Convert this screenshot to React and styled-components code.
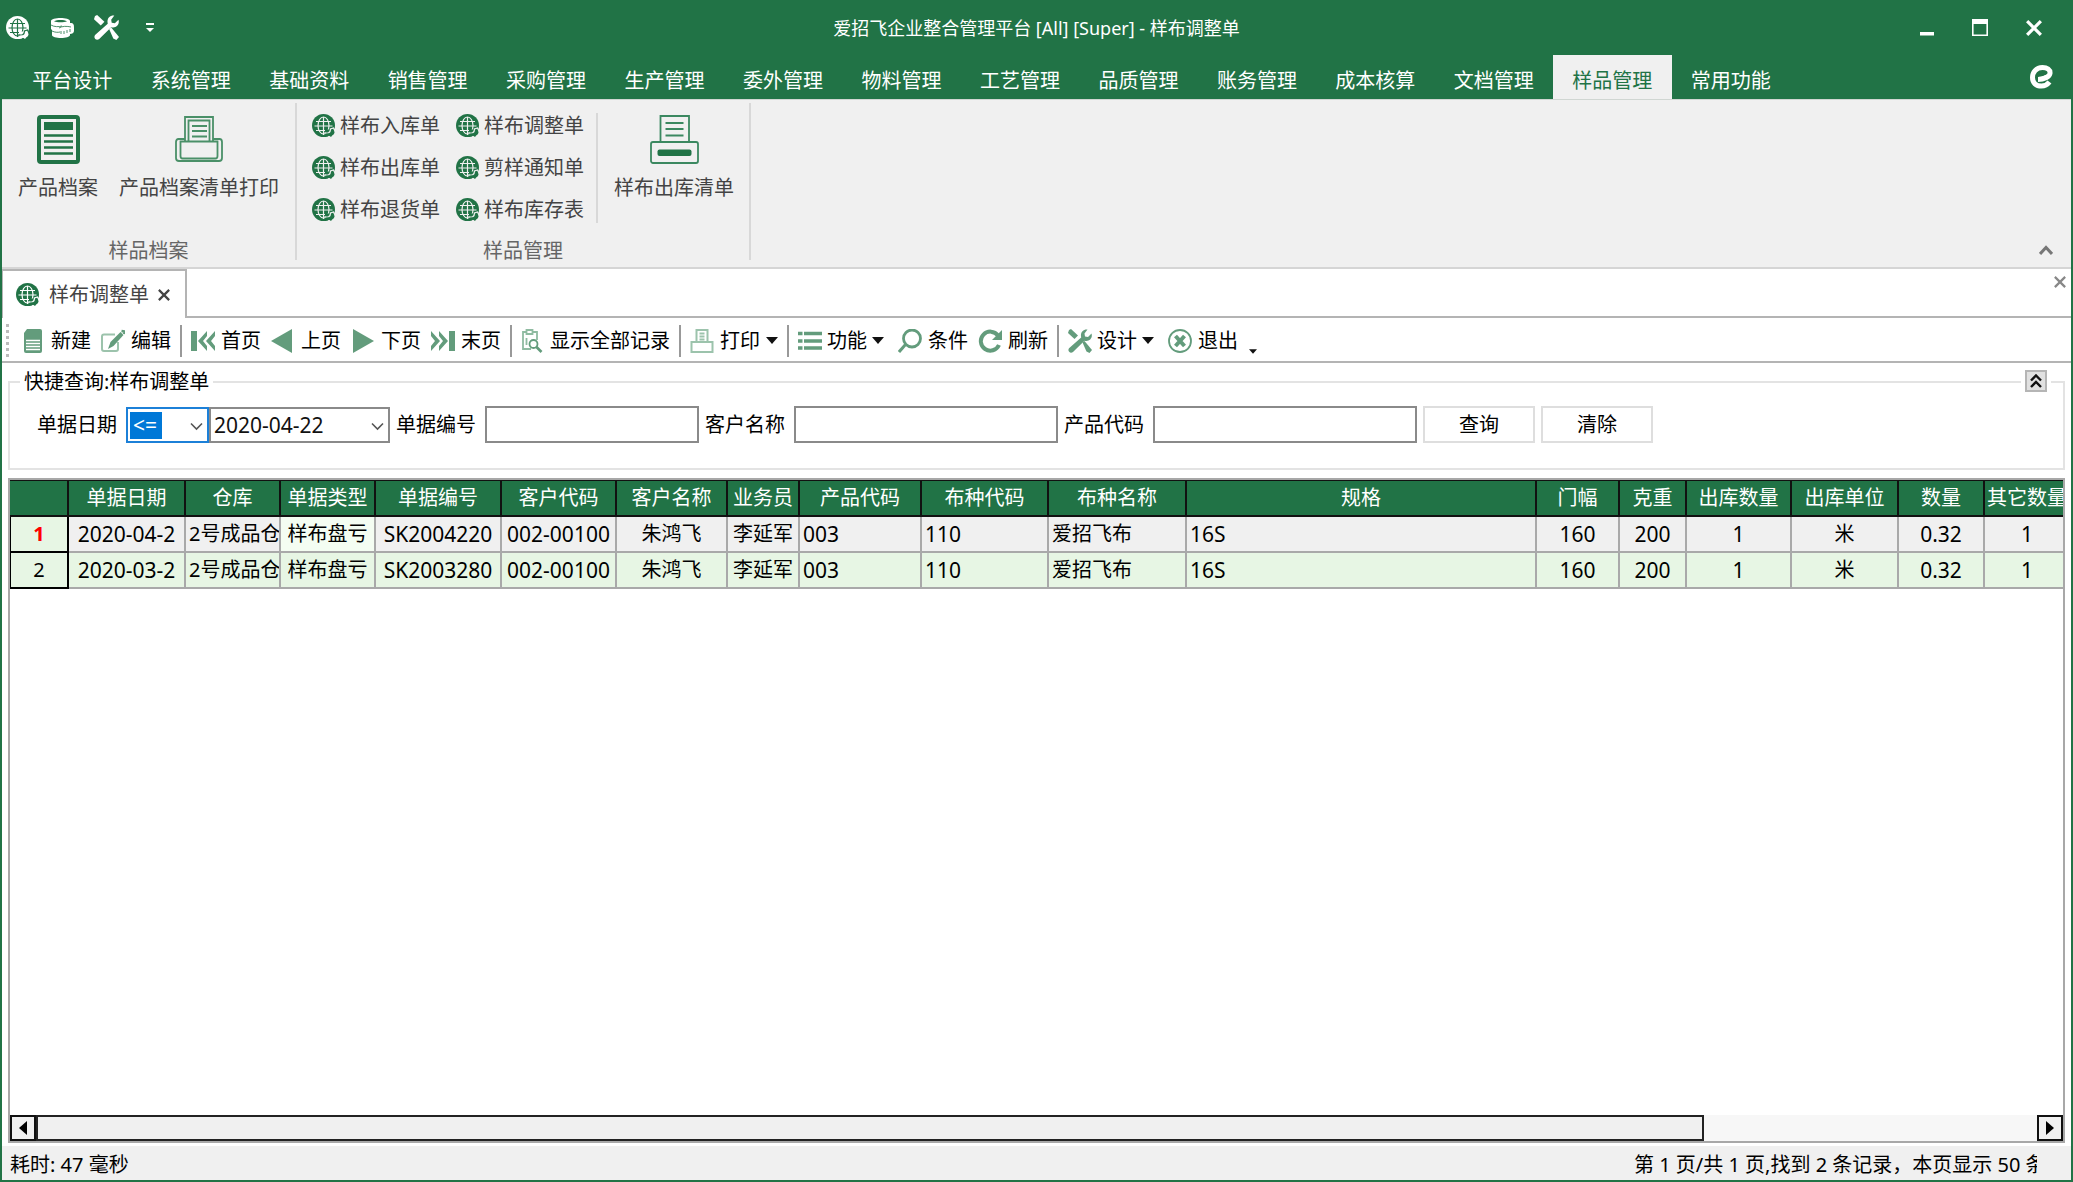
import React from 'react';
import styled, { createGlobalStyle } from 'styled-components';

const GlobalStyle = createGlobalStyle`
    * {
        box-sizing: border-box;
    }
    body {
        margin: 0;
        font-family: "Noto Sans", "Noto Sans CJK SC", sans-serif;
        font-size: 20px;
        line-height: 24px;
        color: #000;
    }
    button, input, select {
        font: inherit;
        color: inherit;
        margin: 0;
        padding: 0;
        border: none;
        border-radius: 0;
        background: none;
    }
`;

const Window = styled.div`
    display: flex;
    flex-direction: column;
    min-height: 100vh;
    border: 2px solid #217346;
    border-top: none;
    background: #fff;
`;

// Title bar
const TitleBar = styled.header`
    display: grid;
    grid-template-columns: 1fr auto 1fr;
    align-items: center;
    height: 55px;
    background: #217346;
    color: #fff;
`;
const QuickAccess = styled.div`
    display: flex;
    align-items: center;
    gap: 19px;
    padding-left: 4px;
`;
const PlainButton = styled.button`
    display: flex;
    align-items: center;
    justify-content: center;
    cursor: pointer;
`;
const WindowTitle = styled.h1`
    margin: 0;
    font-size: 18px;
    font-weight: 400;
`;
const WindowButtons = styled.div`
    display: flex;
    justify-content: flex-end;
    gap: 38px;
    padding-right: 29px;
`;

// Ribbon
const TabRow = styled.nav`
    display: flex;
    justify-content: space-between;
    height: 44px;
    padding-left: 11px;
    padding-right: 17px;
    background: #217346;
`;
const TabList = styled.div`
    display: grid;
    grid-template-columns: repeat(15, 1fr);
    width: 1777px;
`;
const RibbonTab = styled.button`
    padding-top: 8px;
    cursor: pointer;
    color: ${props => (props.$active ? '#217346' : '#fff')};
    background: ${props => (props.$active ? '#f0f0f0' : 'transparent')};
`;
const Ribbon = styled.section`
    display: flex;
    height: 170px;
    padding-top: 3px;
    border-top: 1px solid #d0d6d2;
    border-bottom: 2px solid #d5d5d5;
    background: #f0f0f0;
    color: #444;
`;
const RibbonGroup = styled.div`
    display: flex;
    flex-direction: column;
    justify-content: space-between;
    height: 157px;
    padding: 0 ${props => props.$pad}px;
    border-right: 2px solid #d8d8d8;
`;
const GroupBody = styled.div`
    display: flex;
    gap: ${props => props.$gap || 0}px;
`;
const GroupLabel = styled.div`
    color: #666;
    text-align: center;
    line-height: 18px;
`;
const LargeButton = styled.button`
    display: flex;
    flex-direction: column;
    align-items: center;
    gap: 12px;
    padding-top: 12px;
    cursor: pointer;
`;
const SmallGrid = styled.div`
    display: grid;
    grid-template-columns: 128px 128px;
    grid-auto-rows: 42px;
    column-gap: 16px;
    padding: 2px 12px 0 0;
`;
const SmallButton = styled.button`
    display: flex;
    align-items: center;
    gap: 4px;
    white-space: nowrap;
    cursor: pointer;
`;
const Divider = styled.div`
    width: 2px;
    height: 110px;
    margin: 10px 16px 0 0;
    background: #d8d8d8;
`;
const RibbonCorner = styled.div`
    display: flex;
    flex: 1;
    align-items: flex-end;
    justify-content: flex-end;
    padding: 0 18px 12px;
`;

// Document tabs
const DocTabs = styled.div`
    display: flex;
    justify-content: space-between;
    height: 49px;
    border-bottom: 2px solid #b4b4b4;
    background: #fff;
`;
const DocTab = styled.div`
    display: flex;
    align-items: center;
    gap: 9px;
    height: 49px;
    padding: 0 15px 0 13px;
    border: 2px solid #b4b4b4;
    border-bottom: none;
    border-left-width: 1px;
    background: #fff;
    color: #444;
`;
const DocClose = styled(PlainButton)`
    align-self: flex-start;
    padding: 7px 5px;
`;

// Toolbar
const Toolbar = styled.div`
    display: flex;
    align-items: center;
    height: 45px;
    padding: 2px 0 0 4px;
    border-bottom: 2px solid #b4b4b4;
    background: #fff;
`;
const Grip = styled.div`
    width: 3px;
    height: 34px;
    margin-right: 7px;
    background: repeating-linear-gradient(#bbb 0 3px, #fff 3px 6px);
`;
const ToolButton = styled.button`
    display: flex;
    align-items: center;
    gap: ${props => props.$gap || 6}px;
    padding: 0 ${props => (props.$wide ? 9 : 5)}px 0 5px;
    white-space: nowrap;
    cursor: pointer;
`;
const ToolSeparator = styled.div`
    width: 2px;
    height: 32px;
    margin: 0 4px;
    background: #999;
`;
const Overflow = styled(PlainButton)`
    align-self: flex-end;
    padding: 0 6px 7px;
`;

// Quick query panel
const QueryPanel = styled.section`
    position: relative;
    margin: 18px 6px 0;
    padding: 23px 0 25px 27px;
    border: 2px solid #e3e3e3;
`;
const PanelTitle = styled.h2`
    position: absolute;
    top: -13px;
    left: 10px;
    margin: 0;
    padding: 0 4px;
    font-size: 20px;
    font-weight: 400;
    background: #fff;
`;
const CollapseBox = styled.div`
    position: absolute;
    top: -13px;
    right: 12px;
    padding: 0 4px;
    background: #fff;
`;
const CollapseButton = styled(PlainButton)`
    width: 22px;
    height: 22px;
    border: 2px solid #b5b5b5;
    background: #e1e1e1;
`;
const QueryForm = styled.form`
    display: flex;
    align-items: center;
    gap: 6px;
    height: 37px;
`;
const Field = styled.div`
    display: flex;
    align-items: center;
    gap: 9px;
`;
const FieldLabel = styled.label`
    white-space: nowrap;
`;
const ComboPair = styled.div`
    display: flex;
`;
const Combo = styled.div`
    position: relative;
    width: ${props => props.$width}px;
    svg {
        position: absolute;
        top: 15px;
        right: 6px;
        pointer-events: none;
    }
`;
const ComboSelect = styled.select`
    appearance: none;
    width: 100%;
    height: 36px;
    padding-left: ${props => (props.$selected ? 5 : 3)}px;
    font-size: 21px;
    color: ${props => (props.$selected ? '#fff' : '#111')};
    border: 2px solid ${props => (props.$selected ? '#1c80d8' : '#8a8a8a')};
    background: ${props => (props.$selected
        ? 'linear-gradient(#0078d7, #0078d7) 2px 3px / 32px 27px no-repeat #fff'
        : '#fff')};
    outline: none;
`;
const TextInput = styled.input`
    width: ${props => props.$width}px;
    height: 37px;
    padding: 0 6px;
    border: 2px solid #8a8a8a;
    background: #fff;
`;
const FormButton = styled.button`
    width: 112px;
    height: 37px;
    border: 2px solid #dedede;
    background: #fff;
    cursor: pointer;
`;

// Data grid
const GridFrame = styled.main`
    display: flex;
    flex: 1;
    flex-direction: column;
    margin: 8px 6px 3px;
    border: 2px solid #a8a8a8;
    background: #fff;
`;
const GridScroll = styled.div`
    flex: 1;
    width: 100%;
    min-width: 0;
    overflow: hidden;
`;
const Table = styled.table`
    width: 2061px;
    table-layout: fixed;
    border-collapse: separate;
    border-spacing: 0;
`;
const HeadCell = styled.th`
    height: 37px;
    padding: 0;
    border: 1px solid #111;
    border-width: 1px 2px 2px 0;
    background: #217346;
    color: #fff;
    font-weight: 400;
    white-space: nowrap;
`;
const RowHead = styled.th`
    height: 36px;
    padding: 0;
    border: 2px solid #000;
    border-width: 0 2px 2px 1px;
    background: #e7f6e4;
    color: ${props => (props.$current ? '#f00' : '#000')};
    font-weight: ${props => (props.$current ? 700 : 400)};
`;
const Cell = styled.td`
    height: 36px;
    padding: 0 ${props => (props.$left ? 3 : 0)}px;
    border: 2px solid #a9a9a9;
    border-width: 0 2px 2px 0;
    background: ${props => props.$bg};
    font-size: ${props => (props.$latin ? 21 : 20)}px;
    text-align: ${props => (props.$left ? 'left' : 'center')};
    white-space: nowrap;
    overflow: hidden;
`;
const ScrollBar = styled.div`
    display: flex;
    height: 26px;
    background: #f7f7f7;
`;
const ScrollButton = styled(PlainButton)`
    width: 26px;
    border: 2px solid #111;
    background: #f0f0f0;
`;
const ScrollThumb = styled.div`
    flex: 5;
    border: 2px solid #222;
    background: #f0f0f0;
`;
const ScrollTrack = styled.div`
    flex: 1;
`;

// Status bar
const StatusBar = styled.footer`
    display: flex;
    justify-content: space-between;
    align-items: center;
    height: 34px;
    padding: 4px 34px 0 8px;
    background: #f0f0f0;
`;
const StatusText = styled.div`
    white-space: nowrap;
    line-height: 30px;
`;
const PageInfo = styled(StatusText)`
    width: 403px;
    overflow: hidden;
`;

const TINT = '#639c7c';

function GlobeIcon({ size = 24, color = '#217346', line = '#f0f0f0' }) {
    return (
        <svg width={size} height={size} viewBox="0 0 24 24" fill="none">
            <circle cx="11.5" cy="11.5" r="11.5" fill={color} />
            <g stroke={line} strokeWidth="1.2">
                <ellipse cx="11.5" cy="11.5" rx="5.5" ry="8.5" />
                <path d="M11.5 3v18M4 7.500h15M2.500 12h18M4 16.500h9" />
            </g>
            <path d="M13.500 15.500h9v7h-9z" fill={color} />
            <path d="M12.500 18.500c3 1.500 6 .5 6-3.500l3-1 2 4" stroke={line} strokeWidth="1.3" />
            <path d="M15 24l1.500-2 4.500-1 3-3.500V24z" fill={line} />
            <path d="M14 19.500l5 3.500 3-4z" fill={color} />
        </svg>
    );
}

function DatabaseIcon() {
    return (
        <svg width="26" height="26" viewBox="0 0 26 26" fill="#fff">
            <path d="M2 6c0-4 19-4 19 0v2c4 0 4 2 4 5v3c0 2-2 3-4 3v1c0 4-18 4-18 0v-5l-1-1z" />
            <path d="M5 6.200c3-1.500 10-1.500 13 0-3 1.400-10 1.400-13 0z" fill="#217346" />
            <path d="M2 10c3 2 8 2 11 1M3 16c3 1.500 6 1.500 8 1M10 13c3-2 8-2 12-1" stroke="#217346" strokeWidth=".8" fill="none" />
            <path d="M12 16v3M15 16v3M18 15v3M21 14v3" stroke="#217346" strokeWidth=".8" />
        </svg>
    );
}

function ToolsIcon({ size = 25, color = '#fff' }) {
    return (
        <svg width={size} height={size} viewBox="0 0 24 24" fill={color}>
            <path d="M3 0l7 6.500-3.500 3.500L0 4l1-3z" />
            <path d="M14.500 13.500l2-1.500L24 21l-2.500 3-3-1.500z" />
            <path d="M19.500.500l-3 4 .5 3 3 .5L23.500 4.500c1.500 5-2.500 8.500-7 7.200L5 23c-2.500 2-6-.5-4-3.800L13.200 8.500C12 3.500 15 0 19.500.500z" />
        </svg>
    );
}

function Caret({ width = 12, height = 7, color = '#111' }) {
    return (
        <svg width={width} height={height} viewBox="0 0 12 7">
            <path d="M0 0h12L6 7z" fill={color} />
        </svg>
    );
}

function Chevron() {
    return (
        <svg width="13" height="9" viewBox="0 0 13 9" fill="none" stroke="#555" strokeWidth="1.6">
            <path d="M1 1.500l5.500 5.500L12 1.500" />
        </svg>
    );
}

function CrossIcon({ size = 13, color = '#444', weight = 2.6 }) {
    return (
        <svg width={size} height={size} viewBox="0 0 14 14" fill="none" stroke={color} strokeWidth={weight}>
            <path d="M1 1l12 12M13 1L1 13" />
        </svg>
    );
}

function BrandMark() {
    return (
        <svg width="26" height="24" viewBox="0 0 26 24" fill="none" stroke="#fff">
            <path d="M10 14.500C16 14.500 21.500 12 22 8.500 22.500 4.500 19 2.500 14.500 2.500 8 2.500 4.500 7.500 4.500 12.500c0 5.500 3.500 8.500 9 8.500 3.500 0 6-1.500 8-4" strokeWidth="5" />
            <path d="M10 13.500c5 0 9-2 12-4.500" strokeWidth="3" />
        </svg>
    );
}

function ArchiveIcon() {
    return (
        <svg width="43" height="49" viewBox="0 0 43 49" fill="#217346">
            <rect x="2" y="2" width="39" height="45" rx="2" fill="none" stroke="#217346" strokeWidth="4" />
            <path d="M7 7h29v8H7z" />
            <path d="M7 20.500h29M7 26.500h29M7 32.500h29M7 38.500h29" stroke="#217346" strokeWidth="2.6" />
        </svg>
    );
}

function PrinterIcon() {
    return (
        <svg width="48" height="49" viewBox="0 0 48 49" fill="none" stroke="#4a9068" strokeWidth="1.8">
            <path d="M10 26V2h28v24M13.500 26V5.500h21V26" />
            <path d="M17 11h15M17 16h15M17 21.500h15" />
            <path d="M10 24H3.500Q1 24 1 27v16q0 3 3 3h40q3 0 3-3V27q0-3-2.500-3H38" />
            <path d="M8 26.500H5.500V41q0 2.500 2 2.500h33q2 0 2-2.500V26.500H6" />
        </svg>
    );
}

function ReceiptPrinterIcon() {
    return (
        <svg width="49" height="49" viewBox="0 0 49 49" fill="none" stroke="#3b8860" strokeWidth="1.8">
            <path d="M10.500 26V1h28.500v25M15.500 8h18M15.500 14h18M15.500 20.500h18" />
            <rect x="1" y="27" width="47" height="21" rx="2" />
            <rect x="7.500" y="34.500" width="34" height="6.500" rx="2" fill="#217346" stroke="none" />
        </svg>
    );
}

// 24px toolbar glyphs, keyed by the command that uses them
const glyphs = {
    create: (
        <g>
            <path d="M6 0h13q2 0 2 2v20q0 2-2 2H5q-2 0-2-2V4z" fill={TINT} />
            <path d="M5 11.500h14M5 14.500h14M5 17.500h14M5 20.500h14" stroke="#fff" strokeWidth="1.3" />
        </g>
    ),
    edit: (
        <g fill="none" stroke={TINT}>
            <path d="M14 5.500H3q-2 0-2 2V20q0 2 2 2h12q2 0 2-2v-7" stroke="#9cc3ac" strokeWidth="2" />
            <path d="M7 20l2.500-7L19.500 3l3 3L12.500 17z" fill={TINT} stroke="none" />
            <path d="M20.500 2l3 .5-.5 2.500" strokeWidth="2.5" />
        </g>
    ),
    first: (
        <g fill={TINT}>
            <path d="M0 2h6v20H0z" />
            <path d="M16 2v5l-4 5 4 5v5L7 12zM24 2v5l-4 5 4 5v5l-9-10z" />
        </g>
    ),
    prev: <path d="M21 0v24L0 12z" fill={TINT} />,
    next: <path d="M2 0v24l21-12z" fill={TINT} />,
    last: (
        <g fill={TINT}>
            <path d="M18 2h6v20h-6z" />
            <path d="M8 2v5l4 5-4 5v5l9-10zM0 2v5l4 5-4 5v5l9-10z" />
        </g>
    ),
    showAll: (
        <g fill="none" stroke="#8fbba1" strokeWidth="1.8">
            <path d="M5 3H2v17h8M12 3h4v8" />
            <path d="M5.500 1h6v4h-6zM5.500 9v7" />
            <circle cx="12.500" cy="15" r="4" stroke={TINT} />
            <path d="M15.500 18l5 5" stroke={TINT} strokeWidth="2.6" />
        </g>
    ),
    print: (
        <g fill="none" stroke="#9cc3ac" strokeWidth="2">
            <path d="M6.500 12V1h11v11M9.500 4.500h5M9.500 7.500h5M9.500 10.500h5" />
            <path d="M1.500 13h21v10h-21z" />
        </g>
    ),
    list: (
        <path d="M0 4.500h4.500M6 4.500h18M0 12h4.500M6 12h18M0 19h4.500M6 19h18" stroke={TINT} strokeWidth="3.6" />
    ),
    filter: (
        <g fill="none" stroke={TINT}>
            <circle cx="14" cy="9.500" r="8.500" strokeWidth="2.8" />
            <path d="M7.500 15.500l-6.500 7.500" strokeWidth="3" />
        </g>
    ),
    refresh: (
        <g>
            <path d="M20 6.500A9.500 9.500 0 1 0 21 16" fill="none" stroke={TINT} strokeWidth="4" />
            <path d="M24 1v10H14z" fill={TINT} />
        </g>
    ),
    exit: (
        <g fill="none" stroke={TINT}>
            <circle cx="12" cy="12" r="11" strokeWidth="1.8" />
            <path d="M7.500 7l9 10M16.500 7l-9 10" strokeWidth="4" />
        </g>
    ),
};

function Glyph({ name }) {
    if (name === 'design') {
        return <ToolsIcon size={24} color={TINT} />;
    }
    return <svg width="24" height="24" viewBox="0 0 24 24">{glyphs[name]}</svg>;
}

const ribbonTabs = [
    '平台设计', '系统管理', '基础资料', '销售管理', '采购管理', '生产管理', '委外管理', '物料管理',
    '工艺管理', '品质管理', '账务管理', '成本核算', '文档管理', '样品管理', '常用功能',
];

const sampleCommands = ['样布入库单', '样布调整单', '样布出库单', '剪样通知单', '样布退货单', '样布库存表'];

const toolGroups = [
    [
        { icon: 'create', text: '新建' },
        { icon: 'edit', text: '编辑' },
    ],
    [
        { icon: 'first', text: '首页' },
        { icon: 'prev', text: '上页' },
        { icon: 'next', text: '下页' },
        { icon: 'last', text: '末页' },
    ],
    [{ icon: 'showAll', text: '显示全部记录', gap: 5 }],
    [{ icon: 'print', text: '打印', menu: true }],
    [
        { icon: 'list', text: '功能', menu: true, gap: 5, wide: true },
        { icon: 'filter', text: '条件' },
        { icon: 'refresh', text: '刷新' },
    ],
    [
        { icon: 'design', text: '设计', menu: true, gap: 5, wide: true },
        { icon: 'exit', text: '退出' },
    ],
];

const columns = [
    { title: '单据日期', width: 117, latin: true },
    { title: '仓库', width: 95, left: true },
    { title: '单据类型', width: 95 },
    { title: '单据编号', width: 126, latin: true },
    { title: '客户代码', width: 115, latin: true },
    { title: '客户名称', width: 111 },
    { title: '业务员', width: 72 },
    { title: '产品代码', width: 122, left: true, latin: true },
    { title: '布种代码', width: 127, left: true, latin: true },
    { title: '布种名称', width: 138, left: true },
    { title: '规格', width: 350, left: true, latin: true },
    { title: '门幅', width: 83, latin: true },
    { title: '克重', width: 67, latin: true },
    { title: '出库数量', width: 105, latin: true },
    { title: '出库单位', width: 107 },
    { title: '数量', width: 86, latin: true },
    { title: '其它数量', width: 86, latin: true },
];

const rows = [
    ['2020-04-2', '2号成品仓', '样布盘亏', 'SK2004220', '002-00100', '朱鸿飞', '李延军', '003', '110', '爱招飞布', '16S', '160', '200', '1', '米', '0.32', '1'],
    ['2020-03-2', '2号成品仓', '样布盘亏', 'SK2003280', '002-00100', '朱鸿飞', '李延军', '003', '110', '爱招飞布', '16S', '160', '200', '1', '米', '0.32', '1'],
];

// The current row is grey except for its focused cell
function cellColor(row, col) {
    if (row !== 0) return '#e7f6e4';
    return col === 2 ? '#f4fdf2' : '#f0f0f0';
}

function App() {
    return (
        <>
            <GlobalStyle />
            <Window>
                <TitleBar>
                    <QuickAccess>
                        <PlainButton aria-label="主页"><GlobeIcon color="#fff" line="#217346" /></PlainButton>
                        <PlainButton aria-label="数据库"><DatabaseIcon /></PlainButton>
                        <PlainButton aria-label="工具"><ToolsIcon /></PlainButton>
                        <PlainButton aria-label="自定义">
                            <svg width="24" height="10" viewBox="0 0 24 10" fill="#fff">
                                <path d="M8 0h8v2H8zM8 5h8l-4 4z" />
                            </svg>
                        </PlainButton>
                    </QuickAccess>
                    <WindowTitle>爱招飞企业整合管理平台 [All] [Super] - 样布调整单</WindowTitle>
                    <WindowButtons>
                        <PlainButton aria-label="最小化">
                            <svg width="14" height="16" viewBox="0 0 14 16"><path d="M0 12h14v3.500H0z" fill="#fff" /></svg>
                        </PlainButton>
                        <PlainButton aria-label="最大化">
                            <svg width="16" height="17" viewBox="0 0 16 17">
                                <path d="M.8.800h14.400v15.400H.8z" fill="none" stroke="#fff" strokeWidth="1.6" />
                                <path d="M0 0h16v5H0z" fill="#fff" />
                            </svg>
                        </PlainButton>
                        <PlainButton aria-label="关闭"><CrossIcon size={16} color="#fff" weight={2.8} /></PlainButton>
                    </WindowButtons>
                </TitleBar>
                <TabRow>
                    <TabList>
                        {ribbonTabs.map(tab => (
                            <RibbonTab key={tab} $active={tab === '样品管理'}>{tab}</RibbonTab>
                        ))}
                    </TabList>
                    <PlainButton aria-label="关于"><BrandMark /></PlainButton>
                </TabRow>
                <Ribbon>
                    <RibbonGroup $pad={16}>
                        <GroupBody $gap={21}>
                            <LargeButton><ArchiveIcon />产品档案</LargeButton>
                            <LargeButton><PrinterIcon />产品档案清单打印</LargeButton>
                        </GroupBody>
                        <GroupLabel>样品档案</GroupLabel>
                    </RibbonGroup>
                    <RibbonGroup $pad={15}>
                        <GroupBody>
                            <SmallGrid>
                                {sampleCommands.map(name => (
                                    <SmallButton key={name}><GlobeIcon />{name}</SmallButton>
                                ))}
                            </SmallGrid>
                            <Divider />
                            <LargeButton><ReceiptPrinterIcon />样布出库清单</LargeButton>
                        </GroupBody>
                        <GroupLabel>样品管理</GroupLabel>
                    </RibbonGroup>
                    <RibbonCorner>
                        <PlainButton aria-label="折叠功能区">
                            <svg width="14" height="10" viewBox="0 0 14 10" fill="none" stroke="#777" strokeWidth="3">
                                <path d="M1 9l6-6.500L13 9" />
                            </svg>
                        </PlainButton>
                    </RibbonCorner>
                </Ribbon>
                <DocTabs>
                    <DocTab>
                        <GlobeIcon line="#fff" />
                        样布调整单
                        <PlainButton aria-label="关闭标签"><CrossIcon size={12} /></PlainButton>
                    </DocTab>
                    <DocClose aria-label="关闭文档"><CrossIcon size={12} color="#888" /></DocClose>
                </DocTabs>
                <Toolbar>
                    <Grip />
                    {toolGroups.map((group, i) => (
                        <React.Fragment key={group[0].icon}>
                            {i > 0 && <ToolSeparator />}
                            {group.map(tool => (
                                <ToolButton key={tool.icon} $gap={tool.gap} $wide={tool.wide}>
                                    <Glyph name={tool.icon} />
                                    {tool.text}
                                    {tool.menu && <Caret />}
                                </ToolButton>
                            ))}
                        </React.Fragment>
                    ))}
                    <Overflow aria-label="更多"><Caret width={8} height={5} /></Overflow>
                </Toolbar>
                <QueryPanel>
                    <PanelTitle>快捷查询:样布调整单</PanelTitle>
                    <CollapseBox>
                        <CollapseButton aria-label="收起">
                            <svg width="12" height="14" viewBox="0 0 12 14" fill="none" stroke="#111" strokeWidth="2.4">
                                <path d="M1 6.500l5-5 5 5M1 13l5-5 5 5" />
                            </svg>
                        </CollapseButton>
                    </CollapseBox>
                    <QueryForm onSubmit={e => e.preventDefault()}>
                        <Field>
                            <FieldLabel htmlFor="bill-date">单据日期</FieldLabel>
                            <ComboPair>
                                <Combo $width={83}>
                                    <ComboSelect $selected aria-label="比较方式" defaultValue="<=">
                                        <option>&lt;=</option>
                                    </ComboSelect>
                                    <Chevron />
                                </Combo>
                                <Combo $width={181}>
                                    <ComboSelect id="bill-date" defaultValue="2020-04-22">
                                        <option>2020-04-22</option>
                                    </ComboSelect>
                                    <Chevron />
                                </Combo>
                            </ComboPair>
                        </Field>
                        <Field>
                            <FieldLabel htmlFor="bill-no">单据编号</FieldLabel>
                            <TextInput id="bill-no" $width={214} />
                        </Field>
                        <Field>
                            <FieldLabel htmlFor="customer">客户名称</FieldLabel>
                            <TextInput id="customer" $width={264} />
                        </Field>
                        <Field>
                            <FieldLabel htmlFor="product">产品代码</FieldLabel>
                            <TextInput id="product" $width={264} />
                        </Field>
                        <FormButton type="submit">查询</FormButton>
                        <FormButton type="reset">清除</FormButton>
                    </QueryForm>
                </QueryPanel>
                <GridFrame>
                    <GridScroll>
                        <Table>
                            <colgroup>
                                <col width="59" />
                                {columns.map(col => <col key={col.title} width={col.width} />)}
                            </colgroup>
                            <thead>
                                <tr>
                                    <HeadCell aria-label="行号" />
                                    {columns.map(col => <HeadCell key={col.title}>{col.title}</HeadCell>)}
                                </tr>
                            </thead>
                            <tbody>
                                {rows.map((row, r) => (
                                    <tr key={row[3]}>
                                        <RowHead $current={r === 0}>{r + 1}</RowHead>
                                        {row.map((value, c) => (
                                            <Cell
                                                key={columns[c].title}
                                                $left={columns[c].left}
                                                $latin={columns[c].latin}
                                                $bg={cellColor(r, c)}
                                            >
                                                {value}
                                            </Cell>
                                        ))}
                                    </tr>
                                ))}
                            </tbody>
                        </Table>
                    </GridScroll>
                    <ScrollBar>
                        <ScrollButton aria-label="向左滚动">
                            <svg width="8" height="14" viewBox="0 0 8 14"><path d="M8 0v14L0 7z" /></svg>
                        </ScrollButton>
                        <ScrollThumb />
                        <ScrollTrack />
                        <ScrollButton aria-label="向右滚动">
                            <svg width="8" height="14" viewBox="0 0 8 14"><path d="M0 0v14l8-7z" /></svg>
                        </ScrollButton>
                    </ScrollBar>
                </GridFrame>
                <StatusBar>
                    <StatusText>耗时: 47 毫秒</StatusText>
                    <PageInfo>第 1 页/共 1 页,找到 2 条记录，本页显示 50 条</PageInfo>
                </StatusBar>
            </Window>
        </>
    );
}

export default App;
